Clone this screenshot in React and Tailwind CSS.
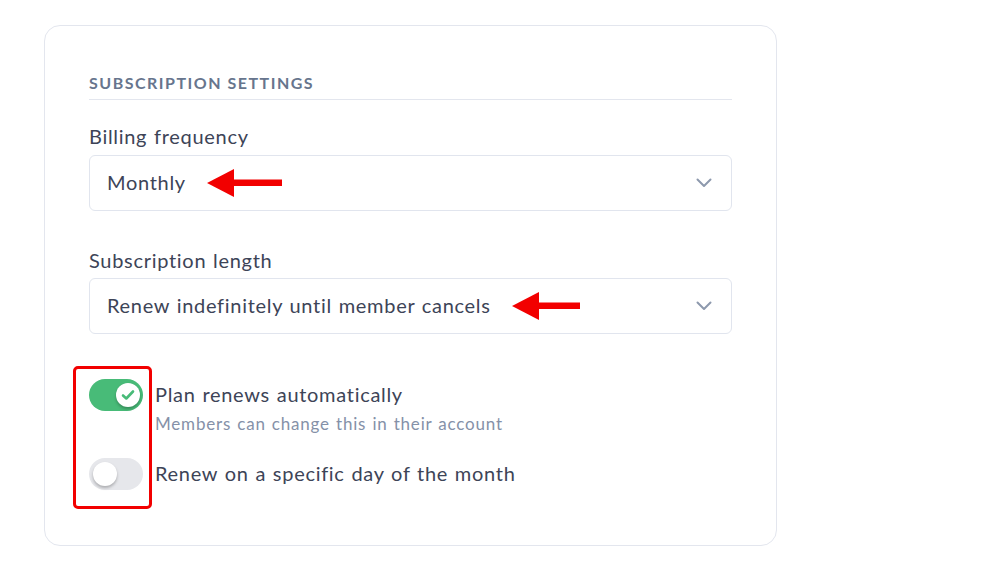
import React from "react";

function Arrow({ w }) {
  return (
    <svg width={w} height="28" viewBox={`0 0 ${w} 28`} className="shrink-0">
      <polygon points="0,14 27,0 27,28" fill="#f20000" />
      <rect x="26" y="10.5" width={w - 26} height="6.5" fill="#f20000" />
    </svg>
  );
}

function Chevron() {
  return (
    <svg width="16" height="10" viewBox="0 0 16 10" className="shrink-0">
      <path d="M1.5 1.5 L8 8 L14.5 1.5" fill="none" stroke="#8d99ad" strokeWidth="2" strokeLinecap="round" strokeLinejoin="round" />
    </svg>
  );
}

const body = "text-[20px] leading-[24px] tracking-[0.7px] [word-spacing:1px] text-[#3d4457]";

function Select({ children, arrowW }) {
  return (
    <div className="flex h-[56px] items-center rounded-[6px] border border-[#e1e5ee] bg-white pl-[17px] pr-[19px]">
      <span className={"-mt-[2px] " + body}>{children}</span>
      <span className="ml-[21px] flex items-center">
        <Arrow w={arrowW} />
      </span>
      <span className="ml-auto flex items-center">
        <Chevron />
      </span>
    </div>
  );
}

export default function App() {
  return (
    <div
      className="min-h-[563px] w-[985px] bg-white pl-[44px] pt-[25px]"
      style={{ fontFamily: "Lato, 'Open Sans', sans-serif" }}
    >
      <div className="relative h-[521px] w-[733px] rounded-[16px] border border-[#e3e6ee] px-[44px] pt-[47px]">
        <div className="border-b border-[#e3e6ee] pb-[6px] text-[16px] font-bold leading-[20px] tracking-[1.5px] text-[#67758d]">
          SUBSCRIPTION SETTINGS
        </div>

        <div className={"mt-[24px] " + body}>Billing frequency</div>
        <div className="mt-[7px]">
          <Select arrowW={75}>Monthly</Select>
        </div>

        <div className={"mt-[37px] " + body}>Subscription length</div>
        <div className="mt-[6px]">
          <Select arrowW={68}>Renew indefinitely until member cancels</Select>
        </div>

        <div className="mt-[45px] flex items-start gap-[12px]">
          <div className="relative h-[32px] w-[54px] shrink-0 rounded-full bg-[#48bb78]">
            <div className="absolute right-[3px] top-[4px] flex h-[24px] w-[24px] items-center justify-center rounded-full bg-white shadow-[0_2px_3px_rgba(0,0,0,0.25)]">
              <svg width="14" height="12" viewBox="0 0 14 12">
                <path d="M2 6.5 L5.3 9.5 L12 2.5" fill="none" stroke="#48bb78" strokeWidth="2.6" strokeLinecap="round" strokeLinejoin="round" />
              </svg>
            </div>
          </div>
          <div className="pt-[3px]">
            <div className={body}>Plan renews automatically</div>
            <div className="mt-[8px] text-[17px] leading-[20px] tracking-[0.8px] [word-spacing:1px] text-[#8591a8]">
              Members can change this in their account
            </div>
          </div>
        </div>

        <div className="mt-[24px] flex items-start gap-[12px]">
          <div className="relative h-[32px] w-[54px] shrink-0 rounded-full bg-[#e6e7eb]">
            <div className="absolute left-[4px] top-[4px] h-[24px] w-[24px] rounded-full bg-white shadow-[0_2px_3px_rgba(0,0,0,0.25)]" />
          </div>
          <div className={"pt-[3px] " + body}>Renew on a specific day of the month</div>
        </div>

        <div className="pointer-events-none absolute left-[28px] top-[340px] h-[143px] w-[79px] rounded-[5px] border-[3px] border-[#f20000]" />
      </div>
    </div>
  );
}
